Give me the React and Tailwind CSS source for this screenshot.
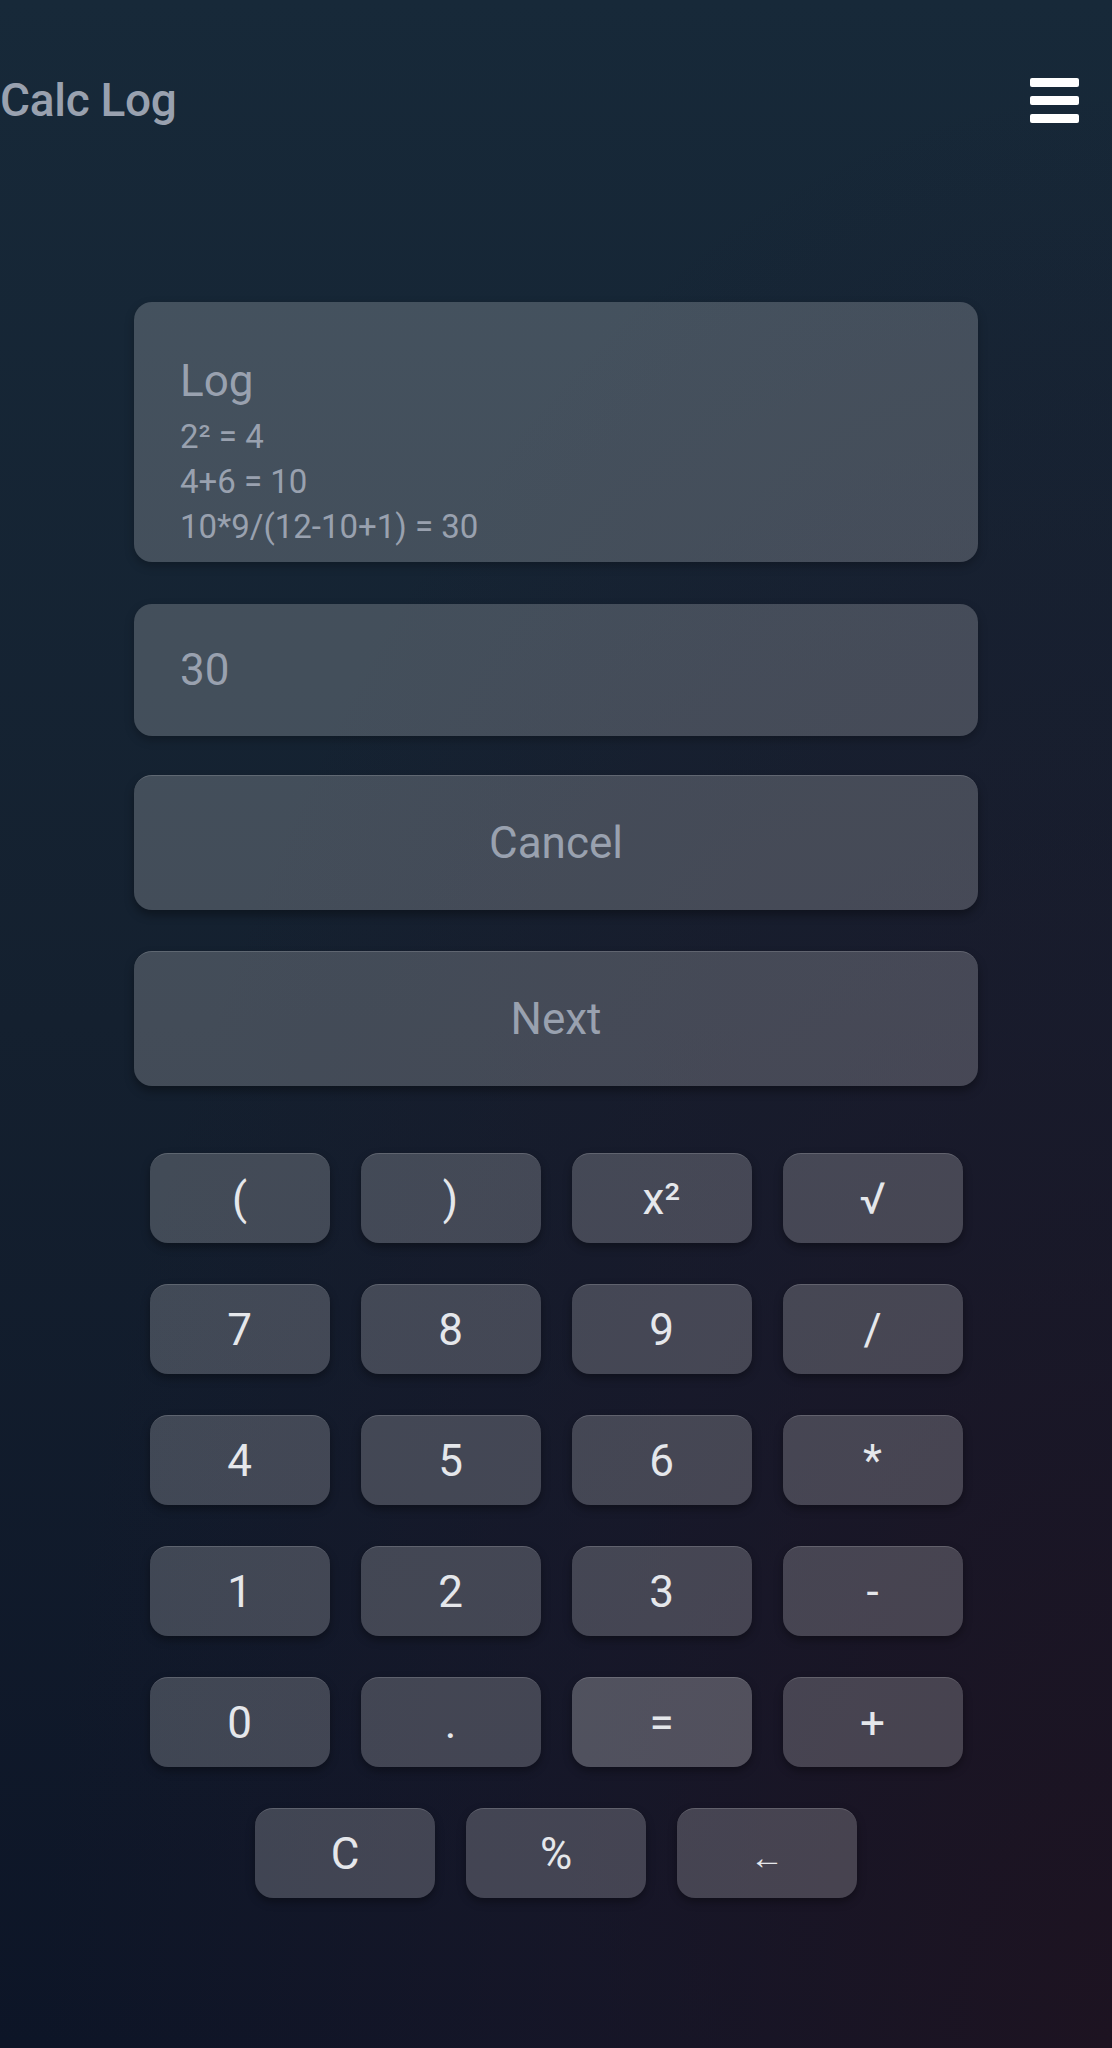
import React from 'react';

const logLines = ['2² = 4', '4+6 = 10', '10*9/(12-10+1) = 30'];

const keys = [
  '(', ')', 'x²', '√',
  '7', '8', '9', '/',
  '4', '5', '6', '*',
  '1', '2', '3', '-',
  '0', '.', '=', '+',
];

const bottomKeys = ['C', '%', '←'];

const Key = ({ label }) => (
  <button
    type="button"
    className={`h-[90px] w-[180px] rounded-[18px] border-t border-white/15 shadow-[0_4px_8px_rgba(0,0,0,0.35)] flex items-center justify-center text-[44px] leading-none text-gray-200 ${
      label === '=' ? 'bg-white/25' : 'bg-white/20'
    }`}
  >
    {label === '←' ? <span className="text-[34px] translate-y-[3px]">←</span> : label}
  </button>
);

const App = () => {
  return (
    <div className="min-h-screen w-full font-['Roboto','Noto_Sans',sans-serif] bg-[radial-gradient(ellipse_at_100%_100%,rgba(29,19,33,1)_0%,rgba(29,22,40,0.5)_35%,transparent_68%),linear-gradient(180deg,#172939_0%,#14202f_50%,#0d1527_100%)]">
      {/* Header */}
      <div className="pt-[60px] h-[140px]">
        <div className="h-[80px] flex items-center justify-between pr-[33px]">
          <h1 className="text-[46px] leading-none font-medium text-gray-400 tracking-[-0.3px]">Calc Log</h1>
          <button type="button" className="flex flex-col gap-[9px]">
            <span className="block h-[9px] w-[49px] rounded-[2px] bg-white" />
            <span className="block h-[9px] w-[49px] rounded-[2px] bg-white" />
            <span className="block h-[9px] w-[49px] rounded-[2px] bg-white" />
          </button>
        </div>
      </div>

      {/* Log + result + actions */}
      <div className="mx-auto w-[844px] mt-[162px] flex flex-col">
        <div className="h-[260px] rounded-[18px] bg-white/20 shadow-[0_4px_10px_rgba(0,0,0,0.25)] px-[46px] pt-[46px] pb-[12px] overflow-hidden text-gray-400">
          <div className="text-[44px] leading-[66px]">Log</div>
          {logLines.map((line) => (
            <div key={line} className="text-[33px] leading-[45px]">{line}</div>
          ))}
        </div>

        <div className="mt-[42px] h-[132px] rounded-[18px] bg-white/20 shadow-[0_4px_10px_rgba(0,0,0,0.25)] px-[46px] flex items-center text-[44px] leading-none text-gray-400">
          30
        </div>

        <button
          type="button"
          className="mt-[39px] h-[135px] rounded-[18px] bg-white/20 border-t border-white/15 shadow-[0_5px_10px_rgba(0,0,0,0.35)] text-[44px] leading-none text-gray-400"
        >
          Cancel
        </button>

        <button
          type="button"
          className="mt-[41px] h-[135px] rounded-[18px] bg-white/20 border-t border-white/15 shadow-[0_5px_10px_rgba(0,0,0,0.35)] text-[44px] leading-none text-gray-400"
        >
          Next
        </button>
      </div>

      {/* Keypad */}
      <div className="mx-auto w-[813px] mt-[67px] pb-[150px]">
        <div className="grid grid-cols-4 gap-x-[31px] gap-y-[41px]">
          {keys.map((k) => (
            <Key key={k} label={k} />
          ))}
        </div>
        <div className="mt-[41px] flex justify-center gap-[31px]">
          {bottomKeys.map((k) => (
            <Key key={k} label={k} />
          ))}
        </div>
      </div>
    </div>
  );
};

export default App;
